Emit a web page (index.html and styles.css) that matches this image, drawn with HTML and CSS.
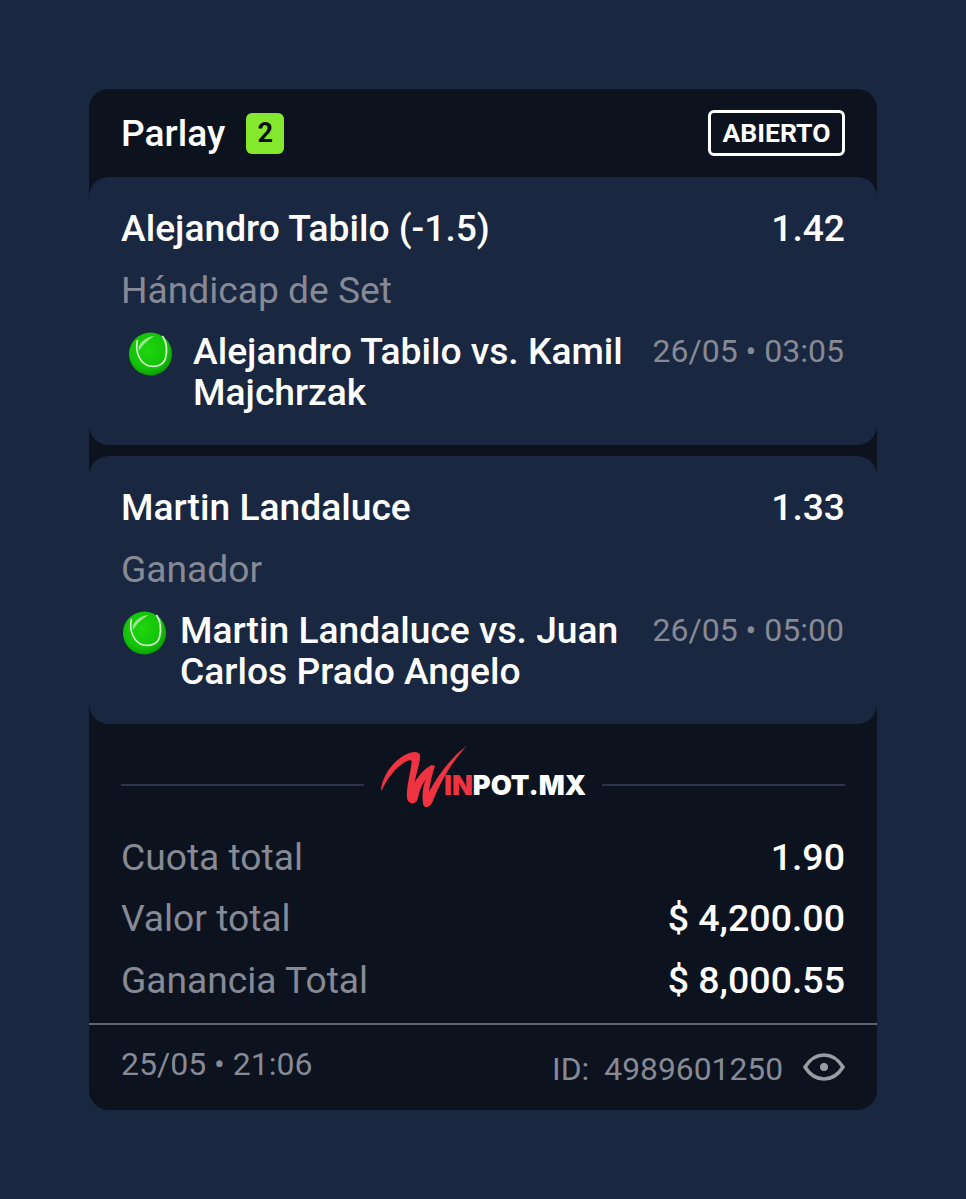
FILE: index.html
```html
<!DOCTYPE html>
<html lang="es">
<head>
<meta charset="utf-8">
<title>Parlay</title>
<link rel="stylesheet" href="styles.css">
</head>
<body>
<svg class="defs" width="0" height="0" aria-hidden="true">
  <defs>
    <radialGradient id="ballFill" cx="45%" cy="40%" r="62%">
      <stop offset="0" stop-color="#1fd60e"/>
      <stop offset="0.72" stop-color="#13c208"/>
      <stop offset="1" stop-color="#0b9704"/>
    </radialGradient>
    <symbol id="ball" viewBox="0 0 44 44">
      <circle cx="22" cy="22" r="21.5" fill="url(#ballFill)"/>
      <path d="M9 8C6 20 12 32 21 34C30 36 36 31 37 26C39 18 38 10 34 4" fill="none" stroke="#dcf3d2" stroke-width="1.7"/>
      <path d="M10 16C12 9 18 5 26 4C20 8 14 12 11 19Z" fill="#b7efad" opacity=".8"/>
    </symbol>
  </defs>
</svg>
<main class="card">
  <header class="head">
    <div class="head-left">
      <span class="title">Parlay</span>
      <span class="count">2</span>
    </div>
    <span class="status">ABIERTO</span>
  </header>

  <section class="leg">
    <div class="row">
      <span class="pick">Alejandro Tabilo (-1.5)</span>
      <span class="pick">1.42</span>
    </div>
    <div class="market">Hándicap de Set</div>
    <div class="event">
      <div class="event-main event-main--a">
        <svg class="ball"><use href="#ball"/></svg>
        <span class="event-name">Alejandro Tabilo vs. Kamil Majchrzak</span>
      </div>
      <span class="event-time">26/05 • 03:05</span>
    </div>
  </section>

  <section class="leg">
    <div class="row">
      <span class="pick">Martin Landaluce</span>
      <span class="pick">1.33</span>
    </div>
    <div class="market">Ganador</div>
    <div class="event">
      <div class="event-main event-main--b">
        <svg class="ball"><use href="#ball"/></svg>
        <span class="event-name">Martin Landaluce vs. Juan Carlos Prado Angelo</span>
      </div>
      <span class="event-time">26/05 • 05:00</span>
    </div>
  </section>

  <div class="brand">
    <span class="brand-line"></span>
    <div class="logo">
      <svg class="logo-w" viewBox="0 0 330 216" aria-hidden="true">
        <path fill="#ef3340" d="M18 150C20 115 50 65 90 45C110 35 130 32 135 45C137 60 126 95 118 128C132 105 150 85 170 75L180 78C172 100 165 130 162 155C190 105 230 50 275 17C240 55 200 115 172 187C165 203 150 205 145 195C140 170 143 140 152 118C140 135 132 155 128 178C122 195 100 195 96 175C93 140 108 95 110 65C110 58 100 60 90 66C62 84 38 112 22 148C20 152 18 153 18 150Z"/>
      </svg>
      <span class="logo-text"><span class="logo-red">IN</span>POT.MX</span>
    </div>
    <span class="brand-line"></span>
  </div>

  <div class="totals">
    <div class="total-row"><span class="total-label">Cuota total</span><span class="total-value">1.90</span></div>
    <div class="total-row"><span class="total-label">Valor total</span><span class="total-value">$ 4,200.00</span></div>
    <div class="total-row"><span class="total-label">Ganancia Total</span><span class="total-value">$ 8,000.55</span></div>
  </div>

  <footer class="foot">
    <span class="foot-date">25/05 • 21:06</span>
    <div class="foot-id">
      <span class="id-text"><span class="id-label">ID:</span>4989601250</span>
      <svg class="eye" viewBox="0 0 42 28" aria-hidden="true">
        <path fill="none" stroke="#9a9ca3" stroke-width="3.6" stroke-linejoin="round" d="M2 14C7 6 13 2 21 2C29 2 35 6 40 14C35 22 29 26 21 26C13 26 7 22 2 14Z"/>
        <circle cx="21" cy="14" r="4" fill="#9a9ca3"/>
      </svg>
    </div>
  </footer>
</main>
</body>
</html>
```

FILE: styles.css
```css
* { box-sizing: border-box; }

html, body { margin: 0; }

body {
  min-height: 1199px;
  padding: 89px 89px 0;
  background: #1a2740;
  font-family: Roboto, "Liberation Sans", sans-serif;
  color: #fff;
}

.defs { position: absolute; }

.card {
  width: 788px;
  height: 1021px;
  background: #0c121e;
  border-radius: 20px;
  display: flex;
  flex-direction: column;
}

.head {
  height: 88px;
  padding: 0 32px;
  display: flex;
  align-items: center;
  justify-content: space-between;
}

.head-left { display: flex; align-items: center; gap: 21px; }

.title { font-size: 37.2px; font-weight: 500; line-height: 39px; }

.count {
  width: 38px;
  height: 41px;
  border-radius: 6px;
  background: #84e92e;
  color: #0a0f12;
  font-size: 27px;
  font-weight: 700;
  line-height: 41px;
  text-align: center;
}

.status {
  width: 137px;
  height: 46px;
  border: 3px solid #fff;
  border-radius: 6px;
  font-size: 26.5px;
  font-weight: 700;
  line-height: 40px;
  text-align: center;
}

.leg {
  height: 268px;
  padding: 31px 32px 0;
  background: #1a2740;
  border-radius: 20px;
}

.leg + .leg { margin-top: 11px; }

.row { display: flex; justify-content: space-between; }

.pick { font-size: 37.2px; font-weight: 500; line-height: 41px; }

.market {
  margin-top: 21px;
  font-size: 37.2px;
  line-height: 41px;
  color: #868a96;
}

.event {
  margin-top: 21px;
  display: flex;
  justify-content: space-between;
  align-items: flex-start;
}

.event-main { display: flex; align-items: flex-start; }

.event-main--a { width: 503px; padding-left: 7px; gap: 20px; }

.event-main--b { width: 500px; padding-left: 1px; gap: 13px; }

.ball { flex: none; width: 45px; height: 44px; }

.event-name { margin-top: -1px; font-size: 37.2px; font-weight: 500; line-height: 41px; }

.event-time {
  margin: -1px 1px 0 0;
  font-size: 32px;
  line-height: 41px;
  color: #868a96;
}

.brand {
  margin-top: 23px;
  padding: 0 32px;
  height: 76px;
  display: flex;
  align-items: center;
  gap: 15px;
}

.brand-line { flex: 1; height: 2px; background: #2c3547; }

.logo { position: relative; width: 208px; height: 64px; }

.logo-w { position: absolute; left: -4px; top: -13px; width: 110px; height: 72px; }

.logo-text {
  position: absolute;
  left: 65px;
  top: 20px;
  font-family: Inter, "Liberation Sans", sans-serif;
  font-size: 27.2px;
  font-weight: 900;
  line-height: 26px;
  white-space: nowrap;
}

.logo-red { color: #ef3340; }

.totals { padding: 3px 32px 0; }

.total-row {
  height: 61.5px;
  display: flex;
  align-items: center;
  justify-content: space-between;
}

.total-label { font-size: 37.2px; color: #868a96; }

.total-value { font-size: 37.5px; font-weight: 500; }

.foot {
  margin-top: 12px;
  flex: 1;
  padding: 0 32px;
  border-top: 2px solid #5f6470;
  display: flex;
  align-items: center;
  justify-content: space-between;
}

.foot-date { font-size: 32px; color: #868a96; margin-top: -6px; }

.foot-id { display: flex; align-items: center; gap: 20px; }

.id-text { font-size: 31.8px; color: #868a96; margin-top: 3px; }

.id-label { margin-right: 15px; }

.eye { width: 42px; height: 28px; }
```
